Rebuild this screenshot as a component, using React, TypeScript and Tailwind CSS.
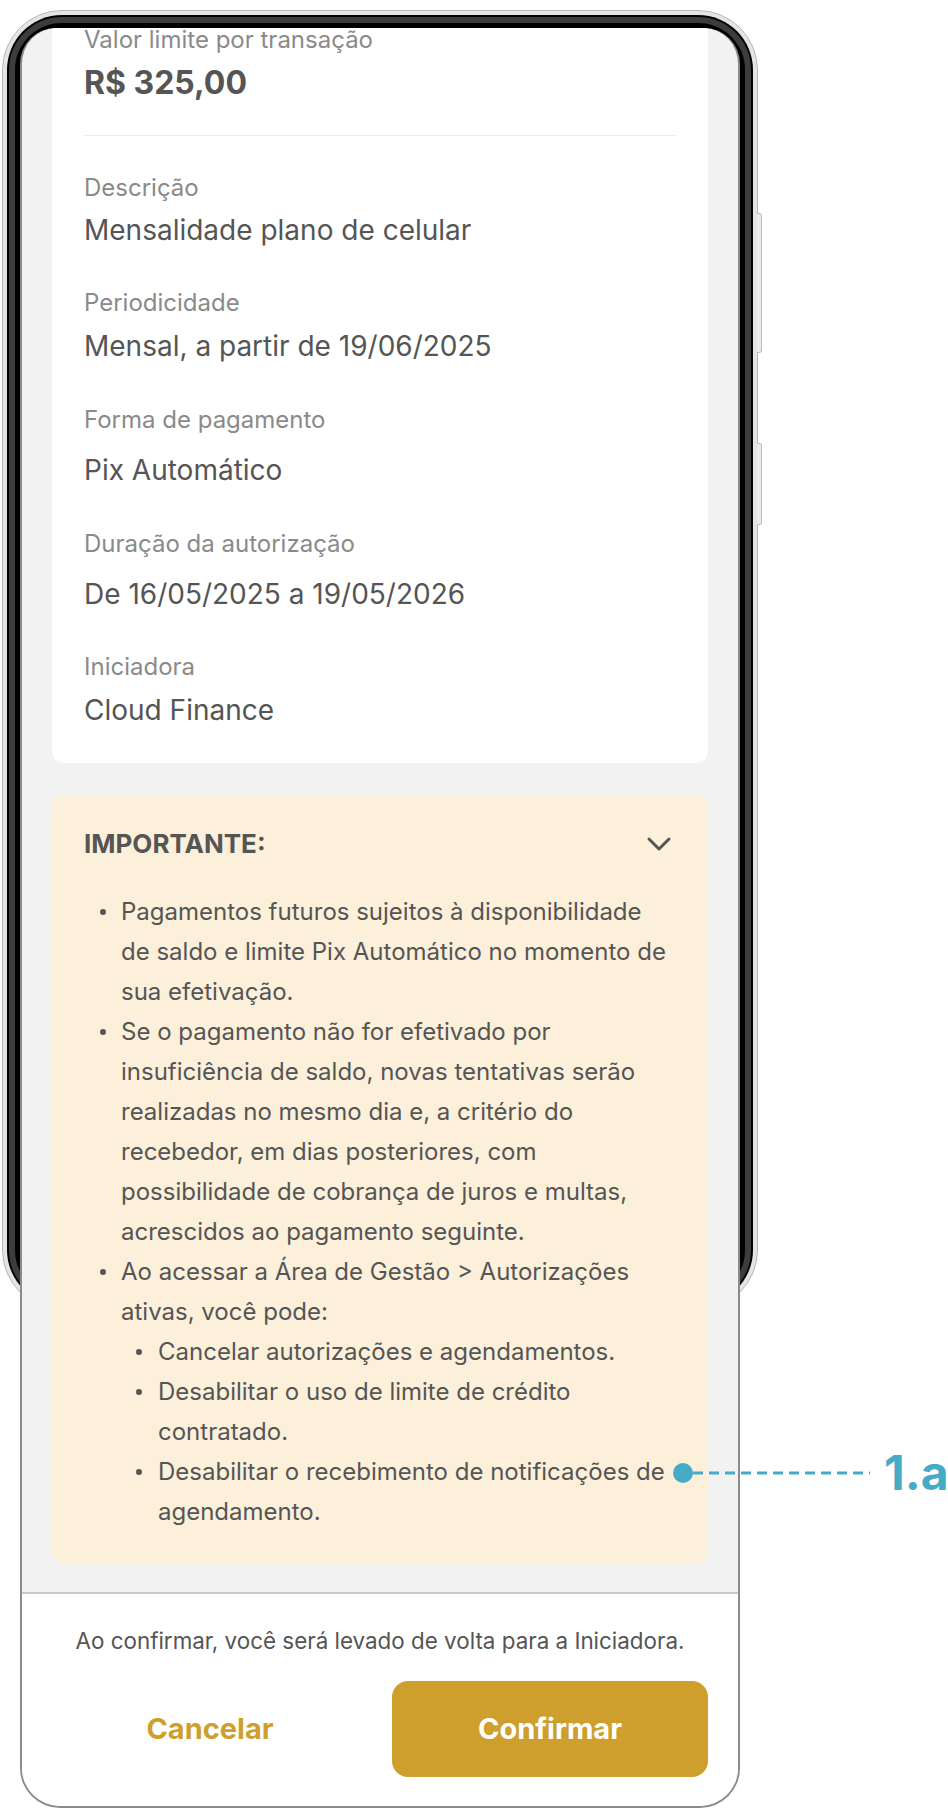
type Row = {
  label: string;
  value: string;
  top: string;
  gap: string;
};

const rows: Row[] = [
  { label: "Descrição", value: "Mensalidade plano de celular", top: "mt-[38px]", gap: "mt-[12px]" },
  { label: "Periodicidade", value: "Mensal, a partir de 19/06/2025", top: "mt-[43px]", gap: "mt-[13px]" },
  { label: "Forma de pagamento", value: "Pix Automático", top: "mt-[44px]", gap: "mt-[20px]" },
  { label: "Duração da autorização", value: "De 16/05/2025 a 19/05/2026", top: "mt-[44px]", gap: "mt-[20px]" },
  { label: "Iniciadora", value: "Cloud Finance", top: "mt-[43px]", gap: "mt-[13px]" },
];

const subItems = [
  "Cancelar autorizações e agendamentos.",
  "Desabilitar o uso de limite de crédito contratado.",
  "Desabilitar o recebimento de notificações de agendamento.",
];

function Bullet({ children, nested }: { children: React.ReactNode; nested?: boolean }) {
  return (
    <li className="flex">
      <span
        className={`mt-[17px] h-[6px] w-[6px] shrink-0 rounded-full bg-[#555] ${
          nested ? "ml-[52px] mr-[16px]" : "ml-[16px] mr-[15px]"
        }`}
      />
      <span>{children}</span>
    </li>
  );
}

function PhoneFrame() {
  return (
    <>
      {/* corpo do aparelho, fica atrás da tela */}
      <div className="absolute left-[2px] top-[10px] h-[1300px] w-[756px] rounded-[60px] border border-[#b8b8b8] bg-[#e4e4e4] p-[4px]">
        <div className="h-full w-full rounded-[55px] bg-black p-[2px]">
          <div className="h-full w-full rounded-[53px] border-[6px] border-[#3c3c3c] bg-black" />
        </div>
      </div>
      <div className="absolute left-[757px] top-[213px] h-[140px] w-[5px] rounded-r-[3px] border border-l-0 border-[#bdbdbd] bg-[#ececec]" />
      <div className="absolute left-[757px] top-[443px] h-[82px] w-[5px] rounded-r-[3px] border border-l-0 border-[#bdbdbd] bg-[#ececec]" />
    </>
  );
}

export default function App() {
  return (
    <div
      className="relative h-[1808px] w-[948px] overflow-hidden bg-white"
      style={{ fontFamily: "Inter, 'Noto Sans', sans-serif" }}
    >
      <PhoneFrame />

      <div className="relative ml-[20px] mt-[28px] w-[720px] overflow-hidden rounded-t-[36px] rounded-b-[40px] border-x-2 border-b-2 border-[#8c8c8c] bg-[#f2f2f2]">
        <div className="px-[30px]">
          {/* card de detalhes, rolado para cima */}
          <div className="-mt-[28px] rounded-b-[12px] bg-white px-[32px] pb-[37px] pt-[26px]">
            <div className="text-[24px] leading-[28px] text-[#8a8a8a]">Valor limite por transação</div>
            <div className="mt-[9px] text-[32px] font-bold leading-[40px] text-[#555]">R$ 325,00</div>
            <div className="mt-[32px] h-[1px] bg-[#ececec]" />
            {rows.map((r) => (
              <div key={r.label} className={r.top}>
                <div className="text-[24px] leading-[28px] text-[#8a8a8a]">{r.label}</div>
                <div className={`${r.gap} text-[28px] leading-[32px] text-[#555]`}>{r.value}</div>
              </div>
            ))}
          </div>

          <div className="mt-[32px] rounded-[12px] bg-[#fcf0da] pb-[31px] pl-[32px] pr-[36px] pt-[33px]">
            <div className="flex items-center justify-between">
              <span className="text-[26px] font-bold leading-[32px] text-[#555]">IMPORTANTE:</span>
              <svg width="26" height="16" viewBox="0 0 26 16" className="mr-[0px]">
                <path d="M3 3 L13 13 L23 3" fill="none" stroke="#555" strokeWidth="3" strokeLinecap="round" strokeLinejoin="round" />
              </svg>
            </div>
            <ul className="mt-[32px] text-[24px] leading-[40px] text-[#555]">
              <Bullet>
                Pagamentos futuros sujeitos à disponibilidade de saldo e limite Pix Automático no momento de sua
                efetivação.
              </Bullet>
              <Bullet>
                Se o pagamento não for efetivado por insuficiência de saldo, novas tentativas serão realizadas no
                mesmo dia e, a critério do recebedor, em dias posteriores, com possibilidade de cobrança de juros e
                multas, acrescidos ao pagamento seguinte.
              </Bullet>
              <Bullet>Ao acessar a Área de Gestão &gt; Autorizações ativas, você pode:</Bullet>
              {subItems.map((s) => (
                <Bullet key={s} nested>
                  {s}
                </Bullet>
              ))}
            </ul>
          </div>
          <div className="h-[29px]" />
        </div>

        <div className="border-t-2 border-[#c9c9c9] bg-white px-[30px] pb-[29px] pt-[33px]">
          <p className="text-center text-[22.4px] leading-[28px] text-[#555]">
            Ao confirmar, você será levado de volta para a Iniciadora.
          </p>
          <div className="mt-[26px] grid grid-cols-2 gap-[24px]">
            <button className="h-[96px] rounded-[16px] text-[29px] font-bold text-[#cf9f2e]">Cancelar</button>
            <button className="h-[96px] rounded-[16px] bg-[#cf9f2e] text-[29px] font-bold text-white">Confirmar</button>
          </div>
        </div>
      </div>

      {/* anotação 1.a */}
      <svg className="absolute left-[672px] top-[1460px]" width="210" height="26" viewBox="0 0 210 26">
        <circle cx="11" cy="13" r="10" fill="#47abc8" />
        <line x1="21" y1="13" x2="198" y2="13" stroke="#47abc8" strokeWidth="3" strokeDasharray="10 6" />
      </svg>
      <span className="absolute left-[884px] top-[1443px] text-[48px] font-bold leading-[60px] text-[#47abc8]">
        1.a
      </span>
    </div>
  );
}
